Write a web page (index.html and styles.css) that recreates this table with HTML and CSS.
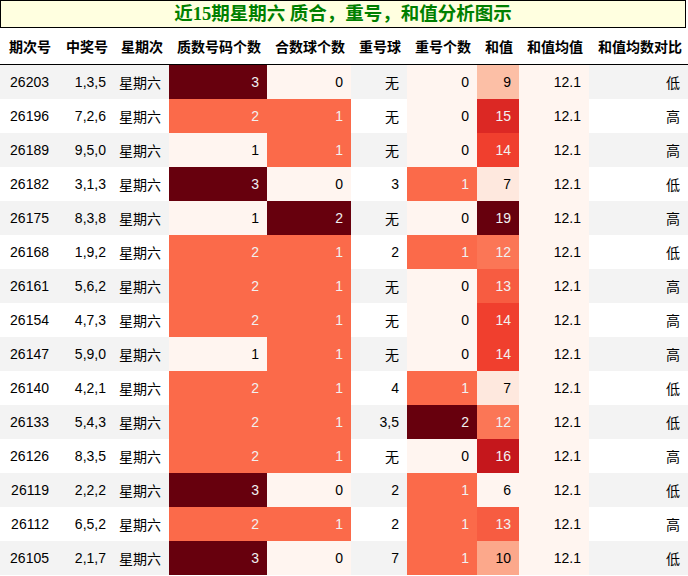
FILE: index.html
```html
<!DOCTYPE html>
<html lang="zh">
<head>
<meta charset="utf-8">
<title>近15期星期六 质合，重号，和值分析图示</title>
<link rel="stylesheet" href="styles.css">
</head>
<body>
<div class="title">近15期星期六 质合，重号，和值分析图示</div>
<table class="grid">
  <colgroup>
    <col class="c1"><col class="c2"><col class="c3"><col class="c4"><col class="c5">
    <col class="c6"><col class="c7"><col class="c8"><col class="c9"><col class="c10">
  </colgroup>
  <thead>
    <tr><th>期次号</th><th>中奖号</th><th>星期次</th><th>质数号码个数</th><th>合数球个数</th><th>重号球</th><th>重号个数</th><th>和值</th><th>和值均值</th><th>和值均数对比</th></tr>
  </thead>
  <tbody>
    <tr><td>26203</td><td>1,3,5</td><td>星期六</td><td class="r3">3</td><td class="r0">0</td><td>无</td><td class="r0">0</td><td class="s9">9</td><td class="r0">12.1</td><td>低</td></tr>
    <tr><td>26196</td><td>7,2,6</td><td>星期六</td><td class="r2">2</td><td class="r2">1</td><td>无</td><td class="r0">0</td><td class="s15">15</td><td class="r0">12.1</td><td>高</td></tr>
    <tr><td>26189</td><td>9,5,0</td><td>星期六</td><td class="r0">1</td><td class="r2">1</td><td>无</td><td class="r0">0</td><td class="s14">14</td><td class="r0">12.1</td><td>高</td></tr>
    <tr><td>26182</td><td>3,1,3</td><td>星期六</td><td class="r3">3</td><td class="r0">0</td><td>3</td><td class="r2">1</td><td class="s7">7</td><td class="r0">12.1</td><td>低</td></tr>
    <tr><td>26175</td><td>8,3,8</td><td>星期六</td><td class="r0">1</td><td class="r3">2</td><td>无</td><td class="r0">0</td><td class="s19">19</td><td class="r0">12.1</td><td>高</td></tr>
    <tr><td>26168</td><td>1,9,2</td><td>星期六</td><td class="r2">2</td><td class="r2">1</td><td>2</td><td class="r2">1</td><td class="s12">12</td><td class="r0">12.1</td><td>低</td></tr>
    <tr><td>26161</td><td>5,6,2</td><td>星期六</td><td class="r2">2</td><td class="r2">1</td><td>无</td><td class="r0">0</td><td class="s13">13</td><td class="r0">12.1</td><td>高</td></tr>
    <tr><td>26154</td><td>4,7,3</td><td>星期六</td><td class="r2">2</td><td class="r2">1</td><td>无</td><td class="r0">0</td><td class="s14">14</td><td class="r0">12.1</td><td>高</td></tr>
    <tr><td>26147</td><td>5,9,0</td><td>星期六</td><td class="r0">1</td><td class="r2">1</td><td>无</td><td class="r0">0</td><td class="s14">14</td><td class="r0">12.1</td><td>高</td></tr>
    <tr><td>26140</td><td>4,2,1</td><td>星期六</td><td class="r2">2</td><td class="r2">1</td><td>4</td><td class="r2">1</td><td class="s7">7</td><td class="r0">12.1</td><td>低</td></tr>
    <tr><td>26133</td><td>5,4,3</td><td>星期六</td><td class="r2">2</td><td class="r2">1</td><td>3,5</td><td class="r3">2</td><td class="s12">12</td><td class="r0">12.1</td><td>低</td></tr>
    <tr><td>26126</td><td>8,3,5</td><td>星期六</td><td class="r2">2</td><td class="r2">1</td><td>无</td><td class="r0">0</td><td class="s16">16</td><td class="r0">12.1</td><td>高</td></tr>
    <tr><td>26119</td><td>2,2,2</td><td>星期六</td><td class="r3">3</td><td class="r0">0</td><td>2</td><td class="r2">1</td><td class="s6">6</td><td class="r0">12.1</td><td>低</td></tr>
    <tr><td>26112</td><td>6,5,2</td><td>星期六</td><td class="r2">2</td><td class="r2">1</td><td>2</td><td class="r2">1</td><td class="s13">13</td><td class="r0">12.1</td><td>高</td></tr>
    <tr><td>26105</td><td>2,1,7</td><td>星期六</td><td class="r3">3</td><td class="r0">0</td><td>7</td><td class="r2">1</td><td class="s10">10</td><td class="r0">12.1</td><td>低</td></tr>
  </tbody>
</table>
</body>
</html>
```
FILE: styles.css
```css
html, body {
  margin: 0;
  padding: 0;
  background: #ffffff;
}
body {
  width: 688px;
  font-family: "Liberation Sans", "Noto Sans CJK SC", sans-serif;
  color: #000000;
}
.title {
  box-sizing: border-box;
  width: 686px;
  height: 28px;
  border: 1px solid #000000;
  background: #ffffe0;
  color: #008000;
  font-family: "Liberation Serif", "Noto Sans CJK SC", serif;
  font-weight: bold;
  font-size: 18.5px;
  line-height: 26px;
  text-align: center;
}
.grid {
  width: 688px;
  table-layout: fixed;
  border-collapse: separate;
  border-spacing: 0;
  font-size: 14px;
}
.c1 { width: 57px; }
.c2 { width: 57px; }
.c3 { width: 55px; }
.c4 { width: 98px; }
.c5 { width: 84px; }
.c6 { width: 56px; }
.c7 { width: 70px; }
.c8 { width: 42px; }
.c9 { width: 70px; }
.c10 { width: 99px; }
.grid th {
  box-sizing: border-box;
  height: 37px;
  padding: 0 6px 0 0;
  border-bottom: 1px solid #000000;
  font-family: "Noto Sans CJK SC", sans-serif;
  font-weight: bold;
  font-size: 14px;
  text-align: right;
  white-space: nowrap;
  vertical-align: middle;
}
.grid td {
  box-sizing: border-box;
  height: 34px;
  padding: 0 8px 0 0;
  text-align: right;
  white-space: nowrap;
  vertical-align: middle;
}
.grid tbody tr:nth-child(odd) td { background: #f3f3f3; }
.grid tbody tr:nth-child(even) td { background: #ffffff; }
.grid tbody tr td.r0 { background: #fff5f0; color: #000000; }
.grid tbody tr td.r2 { background: #fb6a4a; color: #f1f1f1; }
.grid tbody tr td.r3 { background: #67000d; color: #f1f1f1; }
.grid tbody tr td.s6 { background: #fff5f0; color: #000000; }
.grid tbody tr td.s7 { background: #fee8de; color: #000000; }
.grid tbody tr td.s9 { background: #fcbfa6; color: #000000; }
.grid tbody tr td.s10 { background: #fca88b; color: #000000; }
.grid tbody tr td.s12 { background: #fb7656; color: #f1f1f1; }
.grid tbody tr td.s13 { background: #f75c41; color: #f1f1f1; }
.grid tbody tr td.s14 { background: #f03f2e; color: #f1f1f1; }
.grid tbody tr td.s15 { background: #dc2824; color: #f1f1f1; }
.grid tbody tr td.s16 { background: #c5171c; color: #f1f1f1; }
.grid tbody tr td.s19 { background: #67000d; color: #f1f1f1; }
```
